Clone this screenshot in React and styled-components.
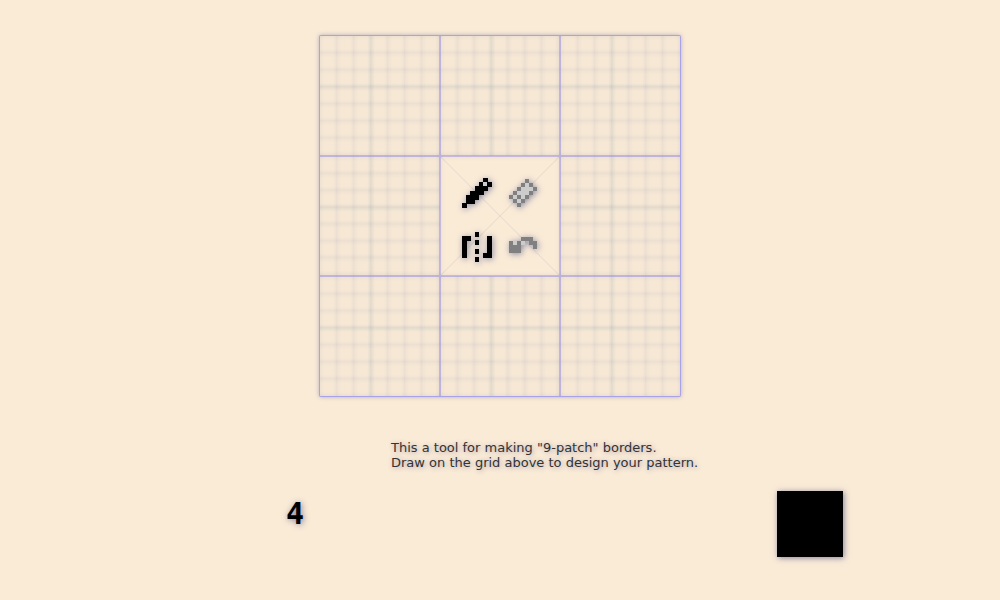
import { useState } from 'react';
import styled, { createGlobalStyle } from 'styled-components';

const GlobalStyle = createGlobalStyle`
  * {
    box-sizing: border-box;
  }

  body {
    margin: 0;
    background-color: #faebd7;
    color: #333;
    font-family: "DejaVu Sans", sans-serif;
    font-size: 13px;
    line-height: 15px;
  }
`;

const Page = styled.main`
  display: flex;
  flex-direction: column;
  align-items: center;
  gap: 44px;
  padding: 36px 20px;
`;

const Board = styled.section`
  display: grid;
  grid-template-columns: repeat(3, 1fr);
  grid-template-rows: repeat(3, 1fr);
  width: 100%;
  max-width: 360px;
  aspect-ratio: 1;
  border-radius: 1px;
  box-shadow: 0 0 0 1px #a9a2e6, 0 0 4px 1px rgba(100, 100, 150, 0.45);
`;

const line = 'rgba(145, 135, 225, 0.5)';

const Patch = styled.div`
  border: 0 solid ${line};
  border-left-width: ${props => (props.$col > 0 ? 1 : 0)}px;
  border-right-width: ${props => (props.$col < 2 ? 1 : 0)}px;
  border-top-width: ${props => (props.$row > 0 ? 1 : 0)}px;
  border-bottom-width: ${props => (props.$row < 2 ? 1 : 0)}px;
`;

const PixelPatch = styled(Patch)`
  --soft: rgba(100, 120, 160, 0.06);
  --thin: rgba(100, 100, 160, 0.07);
  background-color: #f7e8d5;
  background-image:
    linear-gradient(to right, transparent 40%, rgba(90, 140, 140, 0.07) 43%, transparent 46%),
    linear-gradient(to bottom, transparent 40%, rgba(90, 140, 140, 0.07) 43%, transparent 46%),
    linear-gradient(to right, var(--soft), transparent 4px, transparent calc(100% - 4px), var(--soft) calc(100% - 1px), var(--thin) calc(100% - 1px)),
    linear-gradient(to bottom, var(--soft), transparent 4px, transparent calc(100% - 4px), var(--soft) calc(100% - 1px), var(--thin) calc(100% - 1px));
  background-size: 100% 100%, 100% 100%, calc(100% / 7) 100%, 100% calc(100% / 7);
`;

const diagonal = 'transparent calc(50% - 1px), rgba(100, 100, 150, 0.1) 50%, transparent calc(50% + 1px)';

const ToolPatch = styled(Patch)`
  display: grid;
  grid-template-columns: repeat(2, 46px);
  grid-template-rows: repeat(2, 54px);
  place-content: center;
  padding-top: 8px;
  background-image:
    linear-gradient(45deg, ${diagonal}),
    linear-gradient(135deg, ${diagonal});
  box-shadow: inset 0 0 4px rgba(100, 100, 150, 0.12);
`;

const ToolButton = styled.button`
  display: flex;
  align-items: center;
  justify-content: center;
  padding: 0;
  border: none;
  background: none;
  color: #000;
  cursor: pointer;
  filter: drop-shadow(1px 1px 3px rgba(60, 70, 130, 0.6));

  &:disabled {
    cursor: default;
  }
`;

const Icon = styled.svg`
  width: ${props => props.$size}px;
  height: ${props => props.$size}px;
  overflow: visible;
  shape-rendering: crispEdges;
`;

const Controls = styled.section`
  display: grid;
  grid-template-columns: 105px 1fr 66px;
  row-gap: 21px;
  width: 100%;
  max-width: 686px;
  padding-left: 129px;
`;

const Hint = styled.p`
  grid-column: 2 / 4;
  margin: 0;
  text-shadow: 1px 1px 5px rgba(60, 60, 120, 0.45);
`;

const SizeButton = styled.button`
  justify-self: start;
  align-self: start;
  margin-top: 8px;
  padding: 0;
  border: none;
  background: none;
  color: #000;
  font: bold 30px/30px "DejaVu Sans Mono", monospace;
  text-shadow: 1px 1px 6px rgba(60, 60, 120, 0.6);
  cursor: pointer;
`;

const Swatch = styled.input`
  grid-column: 3;
  appearance: none;
  width: 66px;
  height: 66px;
  padding: 0;
  border: none;
  background: none;
  box-shadow: 1px 1px 6px rgba(60, 60, 120, 0.6);
  cursor: pointer;

  &::-webkit-color-swatch-wrapper {
    padding: 0;
  }

  &::-webkit-color-swatch {
    border: none;
  }
`;

// One string per row: "#" is the outline, "o" the light filling
const sprites = {
  pencil: [
    '.....#.',
    '....#o#',
    '...###.',
    '..###..',
    '.###...',
    '.##....',
    '#......',
  ],
  eraser: [
    '....#..',
    '...#o#.',
    '..#ooo#',
    '.#ooo#.',
    '#o#o#..',
    '.#o#...',
    '..#....',
  ],
  mirror: [
    '...#...',
    '##....#',
    '#..#..#',
    '#.....#',
    '#..#..#',
    '#....##',
    '...#...',
  ],
  undo: [
    '.......',
    '...###.',
    '#o#o.##',
    '###...#',
    '###....',
    '.......',
    '.......',
  ],
};

const Sprite = ({ name, muted }) => {
  // active sprites are drawn a little heavier
  const pixel = muted ? 1 : 1.15;

  return (
    <Icon viewBox="0 0 7 7" $size={muted ? 28 : 30} aria-hidden="true">
      {sprites[name].flatMap((row, y) =>
        [...row].map((cell, x) => cell !== '.' && (
          <rect
            key={`${x}-${y}`}
            x={x + (1 - pixel) / 2}
            y={y + (1 - pixel) / 2}
            width={cell === 'o' ? 1 : pixel}
            height={cell === 'o' ? 1 : pixel}
            fill={cell === 'o' ? '#ccc' : muted ? '#808080' : '#000'}
          />
        ))
      )}
    </Icon>
  );
};

const Tools = () => {
  const [tool, setTool] = useState('pencil');
  const [mirrored, setMirrored] = useState(true);

  return (
    <ToolPatch $col={1} $row={1}>
      <ToolButton type="button" aria-label="Pencil" onClick={() => setTool('pencil')}>
        <Sprite name="pencil" muted={tool !== 'pencil'} />
      </ToolButton>
      <ToolButton type="button" aria-label="Eraser" onClick={() => setTool('eraser')}>
        <Sprite name="eraser" muted={tool !== 'eraser'} />
      </ToolButton>
      <ToolButton type="button" aria-label="Mirror" onClick={() => setMirrored(!mirrored)}>
        <Sprite name="mirror" muted={!mirrored} />
      </ToolButton>
      <ToolButton type="button" aria-label="Undo" disabled>
        <Sprite name="undo" muted />
      </ToolButton>
    </ToolPatch>
  );
};

const App = () => {
  const [size, setSize] = useState(4);
  const [color, setColor] = useState('#000000');

  return (
    <Page>
      <GlobalStyle />

      <Board aria-label="Pattern">
        {Array.from({ length: 9 }, (_, i) =>
          i === 4 ?
            <Tools key={i} />
            :
            <PixelPatch key={i} $col={i % 3} $row={Math.floor(i / 3)} />
        )}
      </Board>

      <Controls>
        <Hint>
          This a tool for making "9-patch" borders.<br />
          Draw on the grid above to design your pattern.
        </Hint>
        <SizeButton type="button" aria-label={`Pixel size ${size}`} onClick={() => setSize(size % 8 + 1)}>
          {size}
        </SizeButton>
        <Swatch type="color" aria-label="Color" value={color} onChange={e => setColor(e.target.value)} />
      </Controls>
    </Page>
  );
};

export default App;
